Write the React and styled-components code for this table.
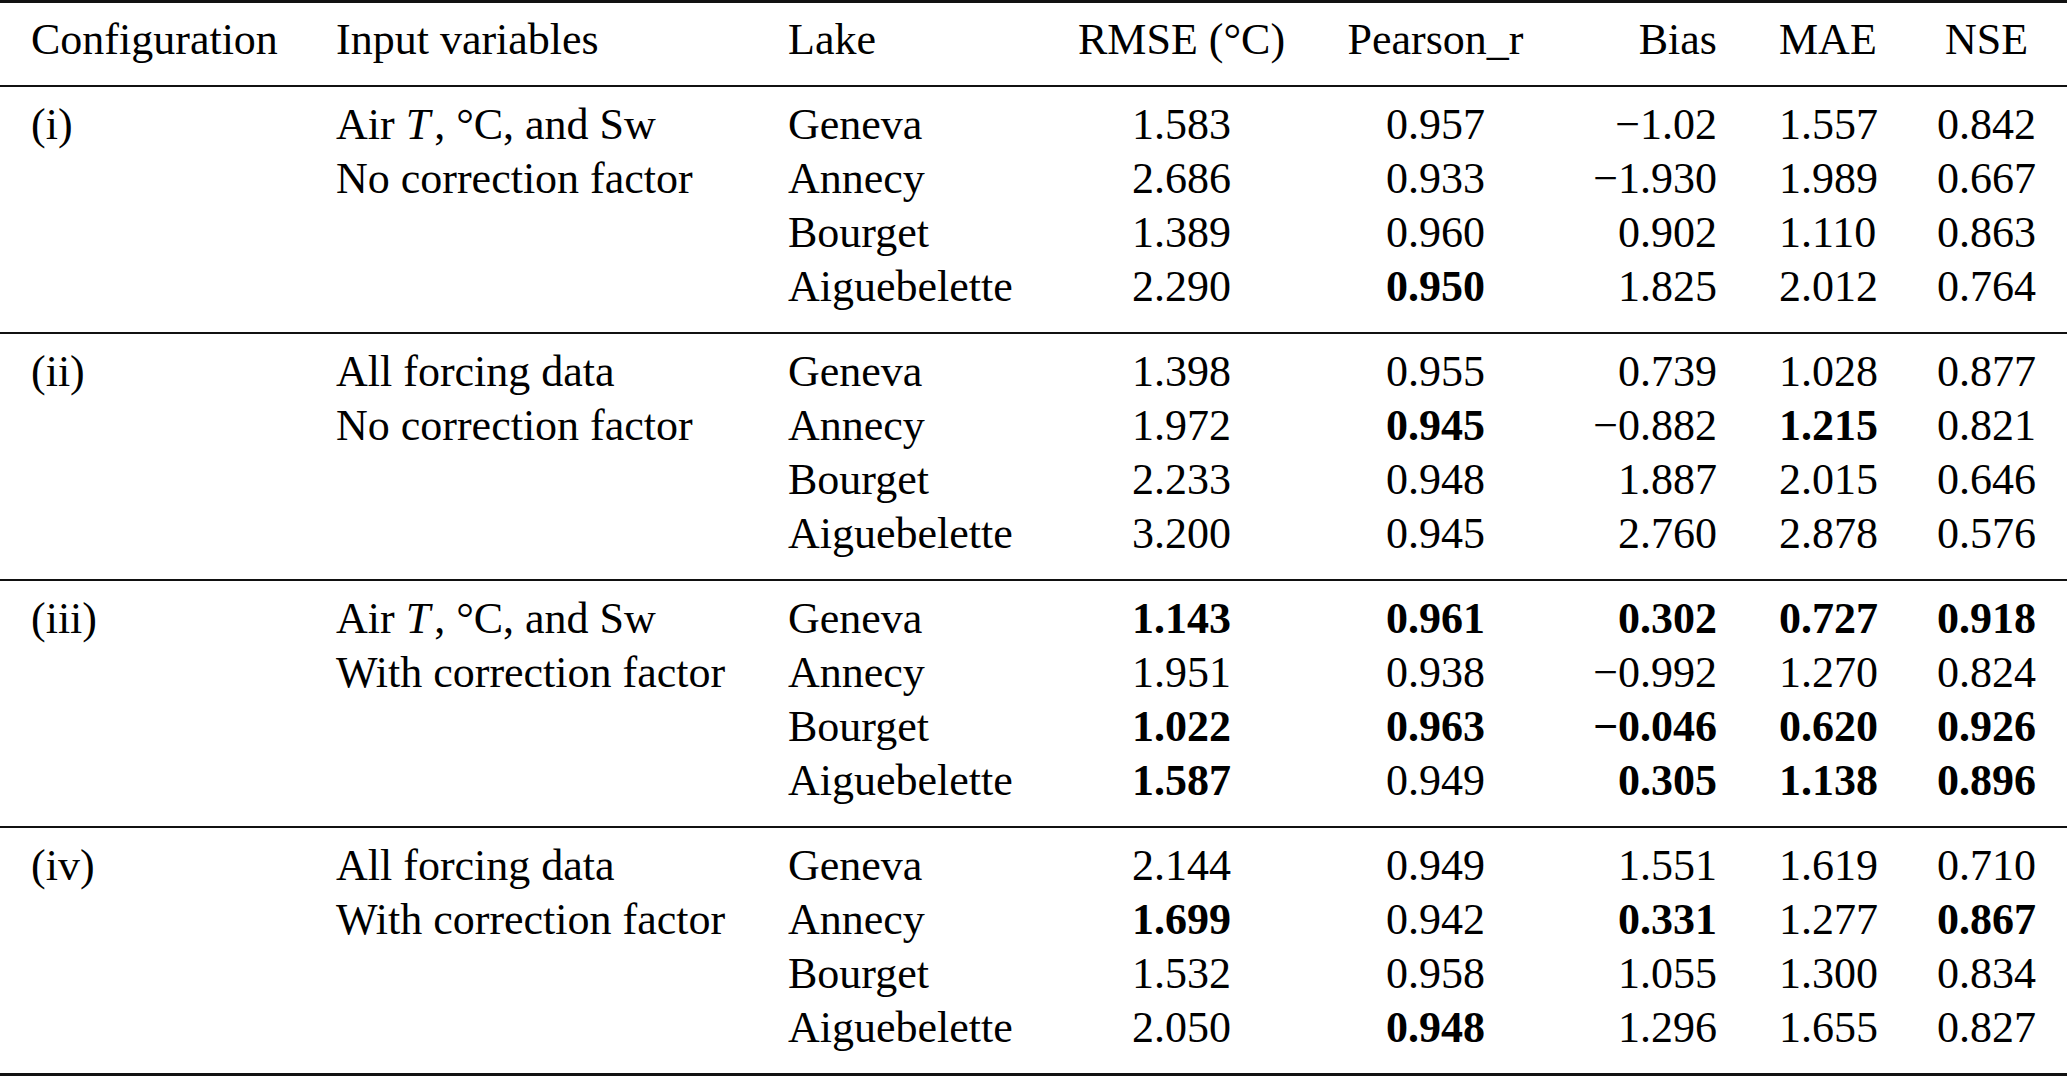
import React from "react";
import styled, { createGlobalStyle } from "styled-components";

const GlobalStyle = createGlobalStyle`
  html, body {
    margin: 0;
    padding: 0;
    background: #fff;
  }
  body {
    font-family: "Liberation Serif", "Times New Roman", serif;
    color: #000;
  }
`;

// column tracks include the 31px cell padding on each side (LaTeX tabcolsep)
const COLUMNS = "305px 452px 290px 269px 239px 193px 158px 161px";
const ALIGN = ["left", "left", "left", "center", "center", "right", "center", "center"];

const Table = styled.div`
  width: 2067px;
  border-top: 3px solid #111;
  font-size: 44px;
  line-height: 54px;
`;

const Section = styled.div`
  display: grid;
  grid-template-columns: ${COLUMNS};
  grid-auto-rows: 54px;
  padding: ${props => (props.$header ? "10px 0 18px" : "11px 0 18px")};
  border-bottom: ${props => (props.$last ? "3px" : "2px")} solid #111;
`;

const Cell = styled.div`
  padding: 0 31px;
  white-space: nowrap;
  text-align: ${props => props.$align};
  font-weight: ${props => (props.$bold ? "bold" : "normal")};
`;

const Var = styled.i`
  font-style: italic;
  margin-right: 4px;
`;

const HEADERS = ["Configuration", "Input variables", "Lake", "RMSE (°C)", "Pearson_r", "Bias", "MAE", "NSE"];
const LAKES = ["Geneva", "Annecy", "Bourget", "Aiguebelette"];

const airInputs = (
  <>
    Air <Var>T</Var>, °C, and Sw
  </>
);

// "*" marks a bold value
const GROUPS = [
  {
    config: "(i)",
    inputs: [airInputs, "No correction factor"],
    rows: [
      ["1.583", "0.957", "−1.02", "1.557", "0.842"],
      ["2.686", "0.933", "−1.930", "1.989", "0.667"],
      ["1.389", "0.960", "0.902", "1.110", "0.863"],
      ["2.290", "*0.950", "1.825", "2.012", "0.764"],
    ],
  },
  {
    config: "(ii)",
    inputs: ["All forcing data", "No correction factor"],
    rows: [
      ["1.398", "0.955", "0.739", "1.028", "0.877"],
      ["1.972", "*0.945", "−0.882", "*1.215", "0.821"],
      ["2.233", "0.948", "1.887", "2.015", "0.646"],
      ["3.200", "0.945", "2.760", "2.878", "0.576"],
    ],
  },
  {
    config: "(iii)",
    inputs: [airInputs, "With correction factor"],
    rows: [
      ["*1.143", "*0.961", "*0.302", "*0.727", "*0.918"],
      ["1.951", "0.938", "−0.992", "1.270", "0.824"],
      ["*1.022", "*0.963", "*−0.046", "*0.620", "*0.926"],
      ["*1.587", "0.949", "*0.305", "*1.138", "*0.896"],
    ],
  },
  {
    config: "(iv)",
    inputs: ["All forcing data", "With correction factor"],
    rows: [
      ["2.144", "0.949", "1.551", "1.619", "0.710"],
      ["*1.699", "0.942", "*0.331", "1.277", "*0.867"],
      ["1.532", "0.958", "1.055", "1.300", "0.834"],
      ["2.050", "*0.948", "1.296", "1.655", "0.827"],
    ],
  },
];

function renderValue(value, col, key) {
  const bold = typeof value === "string" && value.startsWith("*");
  return (
    <Cell key={key} $align={ALIGN[col]} $bold={bold}>
      {bold ? value.slice(1) : value}
    </Cell>
  );
}

export default function App() {
  return (
    <>
      <GlobalStyle />
      <Table>
        <Section $header>
          {HEADERS.map((h, i) => renderValue(h, i, h))}
        </Section>
        {GROUPS.map((group, g) => (
          <Section key={group.config} $last={g === GROUPS.length - 1}>
            {group.rows.map((values, r) => {
              const cells = [r === 0 ? group.config : "", group.inputs[r] || "", LAKES[r], ...values];
              return cells.map((v, c) => renderValue(v, c, `${r}-${c}`));
            })}
          </Section>
        ))}
      </Table>
    </>
  );
}
